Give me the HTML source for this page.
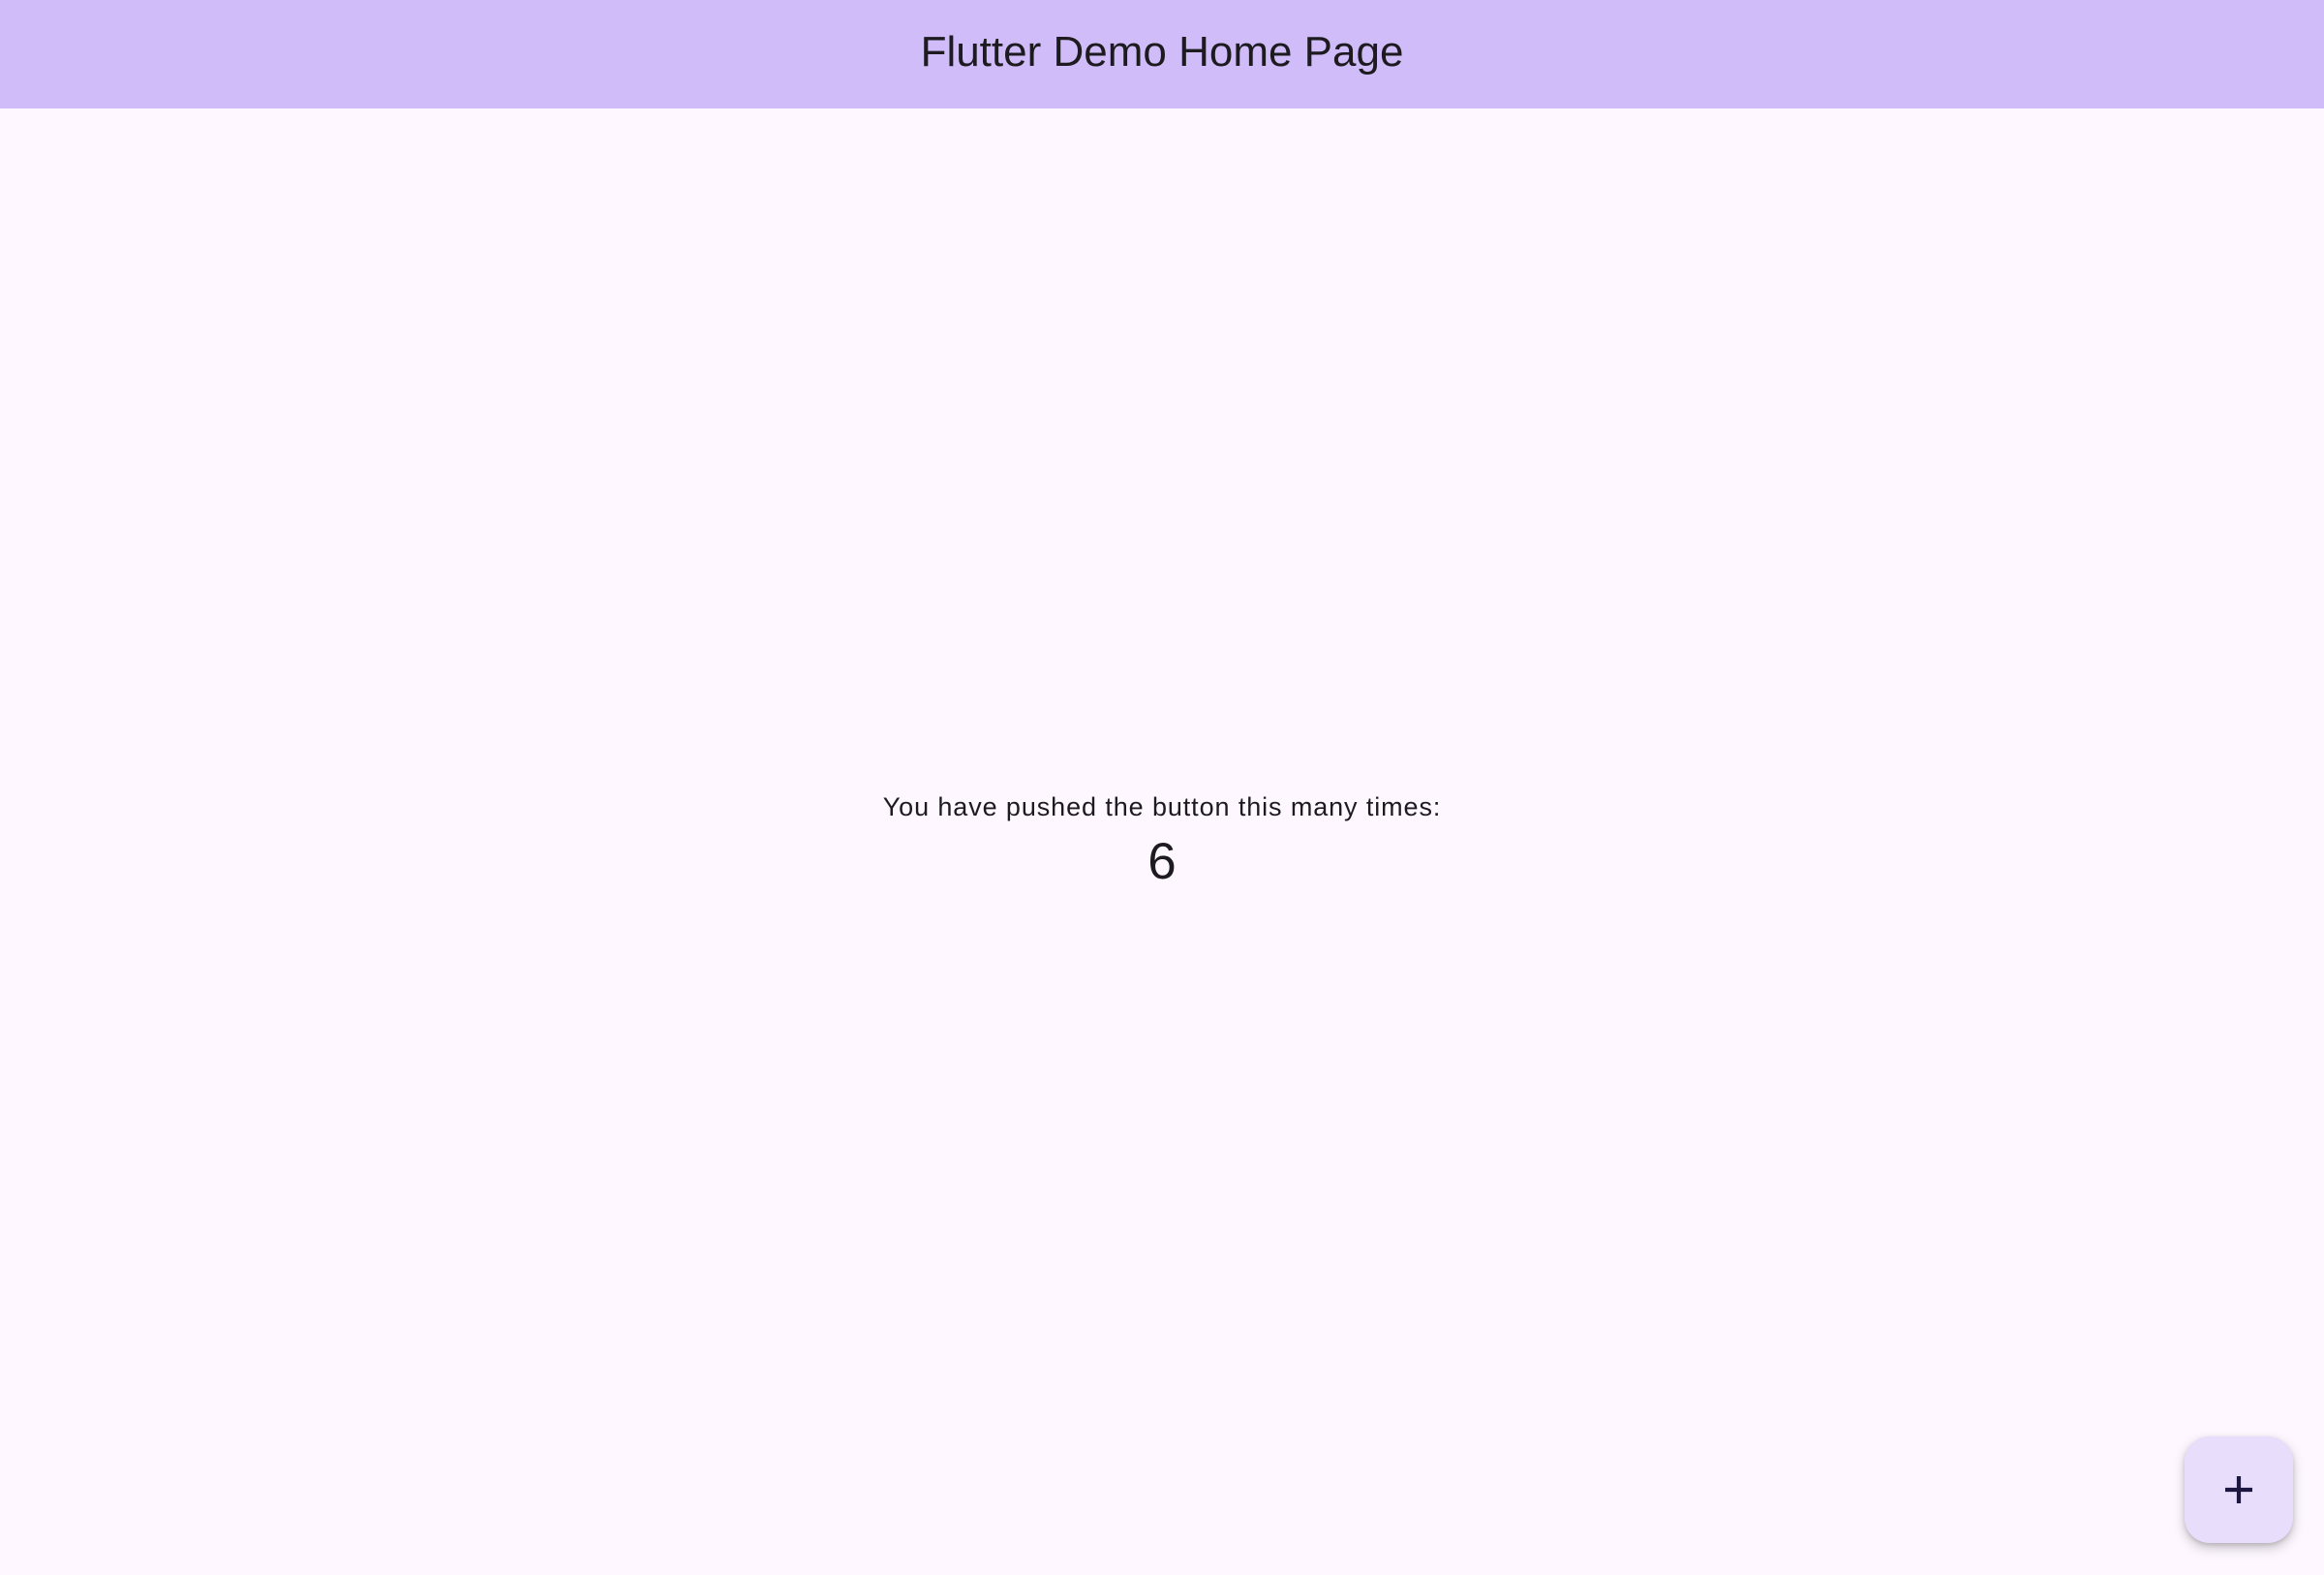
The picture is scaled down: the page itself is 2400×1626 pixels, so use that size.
<!DOCTYPE html>
<html><head><meta charset="utf-8"><style>
html,body{margin:0;padding:0;}
body{width:2400px;height:1626px;background:#fef7ff;position:relative;overflow:hidden;font-family:"Liberation Sans",sans-serif;color:#1d1b20;}
.bar{position:absolute;left:0;top:0;width:2400px;height:112px;background:#d0bcf8;}
.title{position:absolute;left:0;width:2400px;top:24px;text-align:center;font-size:44px;line-height:60px;}
.msg{position:absolute;left:0;width:2400px;top:813px;text-align:center;font-size:27px;line-height:40px;letter-spacing:0.9px;}
.num{position:absolute;left:0;width:2400px;top:855px;text-align:center;font-size:53px;line-height:70px;}
.fab{position:absolute;left:2256px;top:1483px;width:112px;height:110px;border-radius:26px;background:#e8defc;box-shadow:0 5px 12px rgba(0,0,0,0.22),0 2px 4px rgba(0,0,0,0.12);}
.fab svg{position:absolute;left:0;top:0;}
</style></head><body>
<div class="bar"><div class="title">Flutter Demo Home Page</div></div>
<div class="msg">You have pushed the button this many times:</div>
<div class="num">6</div>
<div class="fab"><svg width="112" height="110" viewBox="0 0 112 110"><path d="M56 41V69M42 55H70" stroke="#1d1640" stroke-width="4.2" fill="none"/></svg></div>
</body></html>
